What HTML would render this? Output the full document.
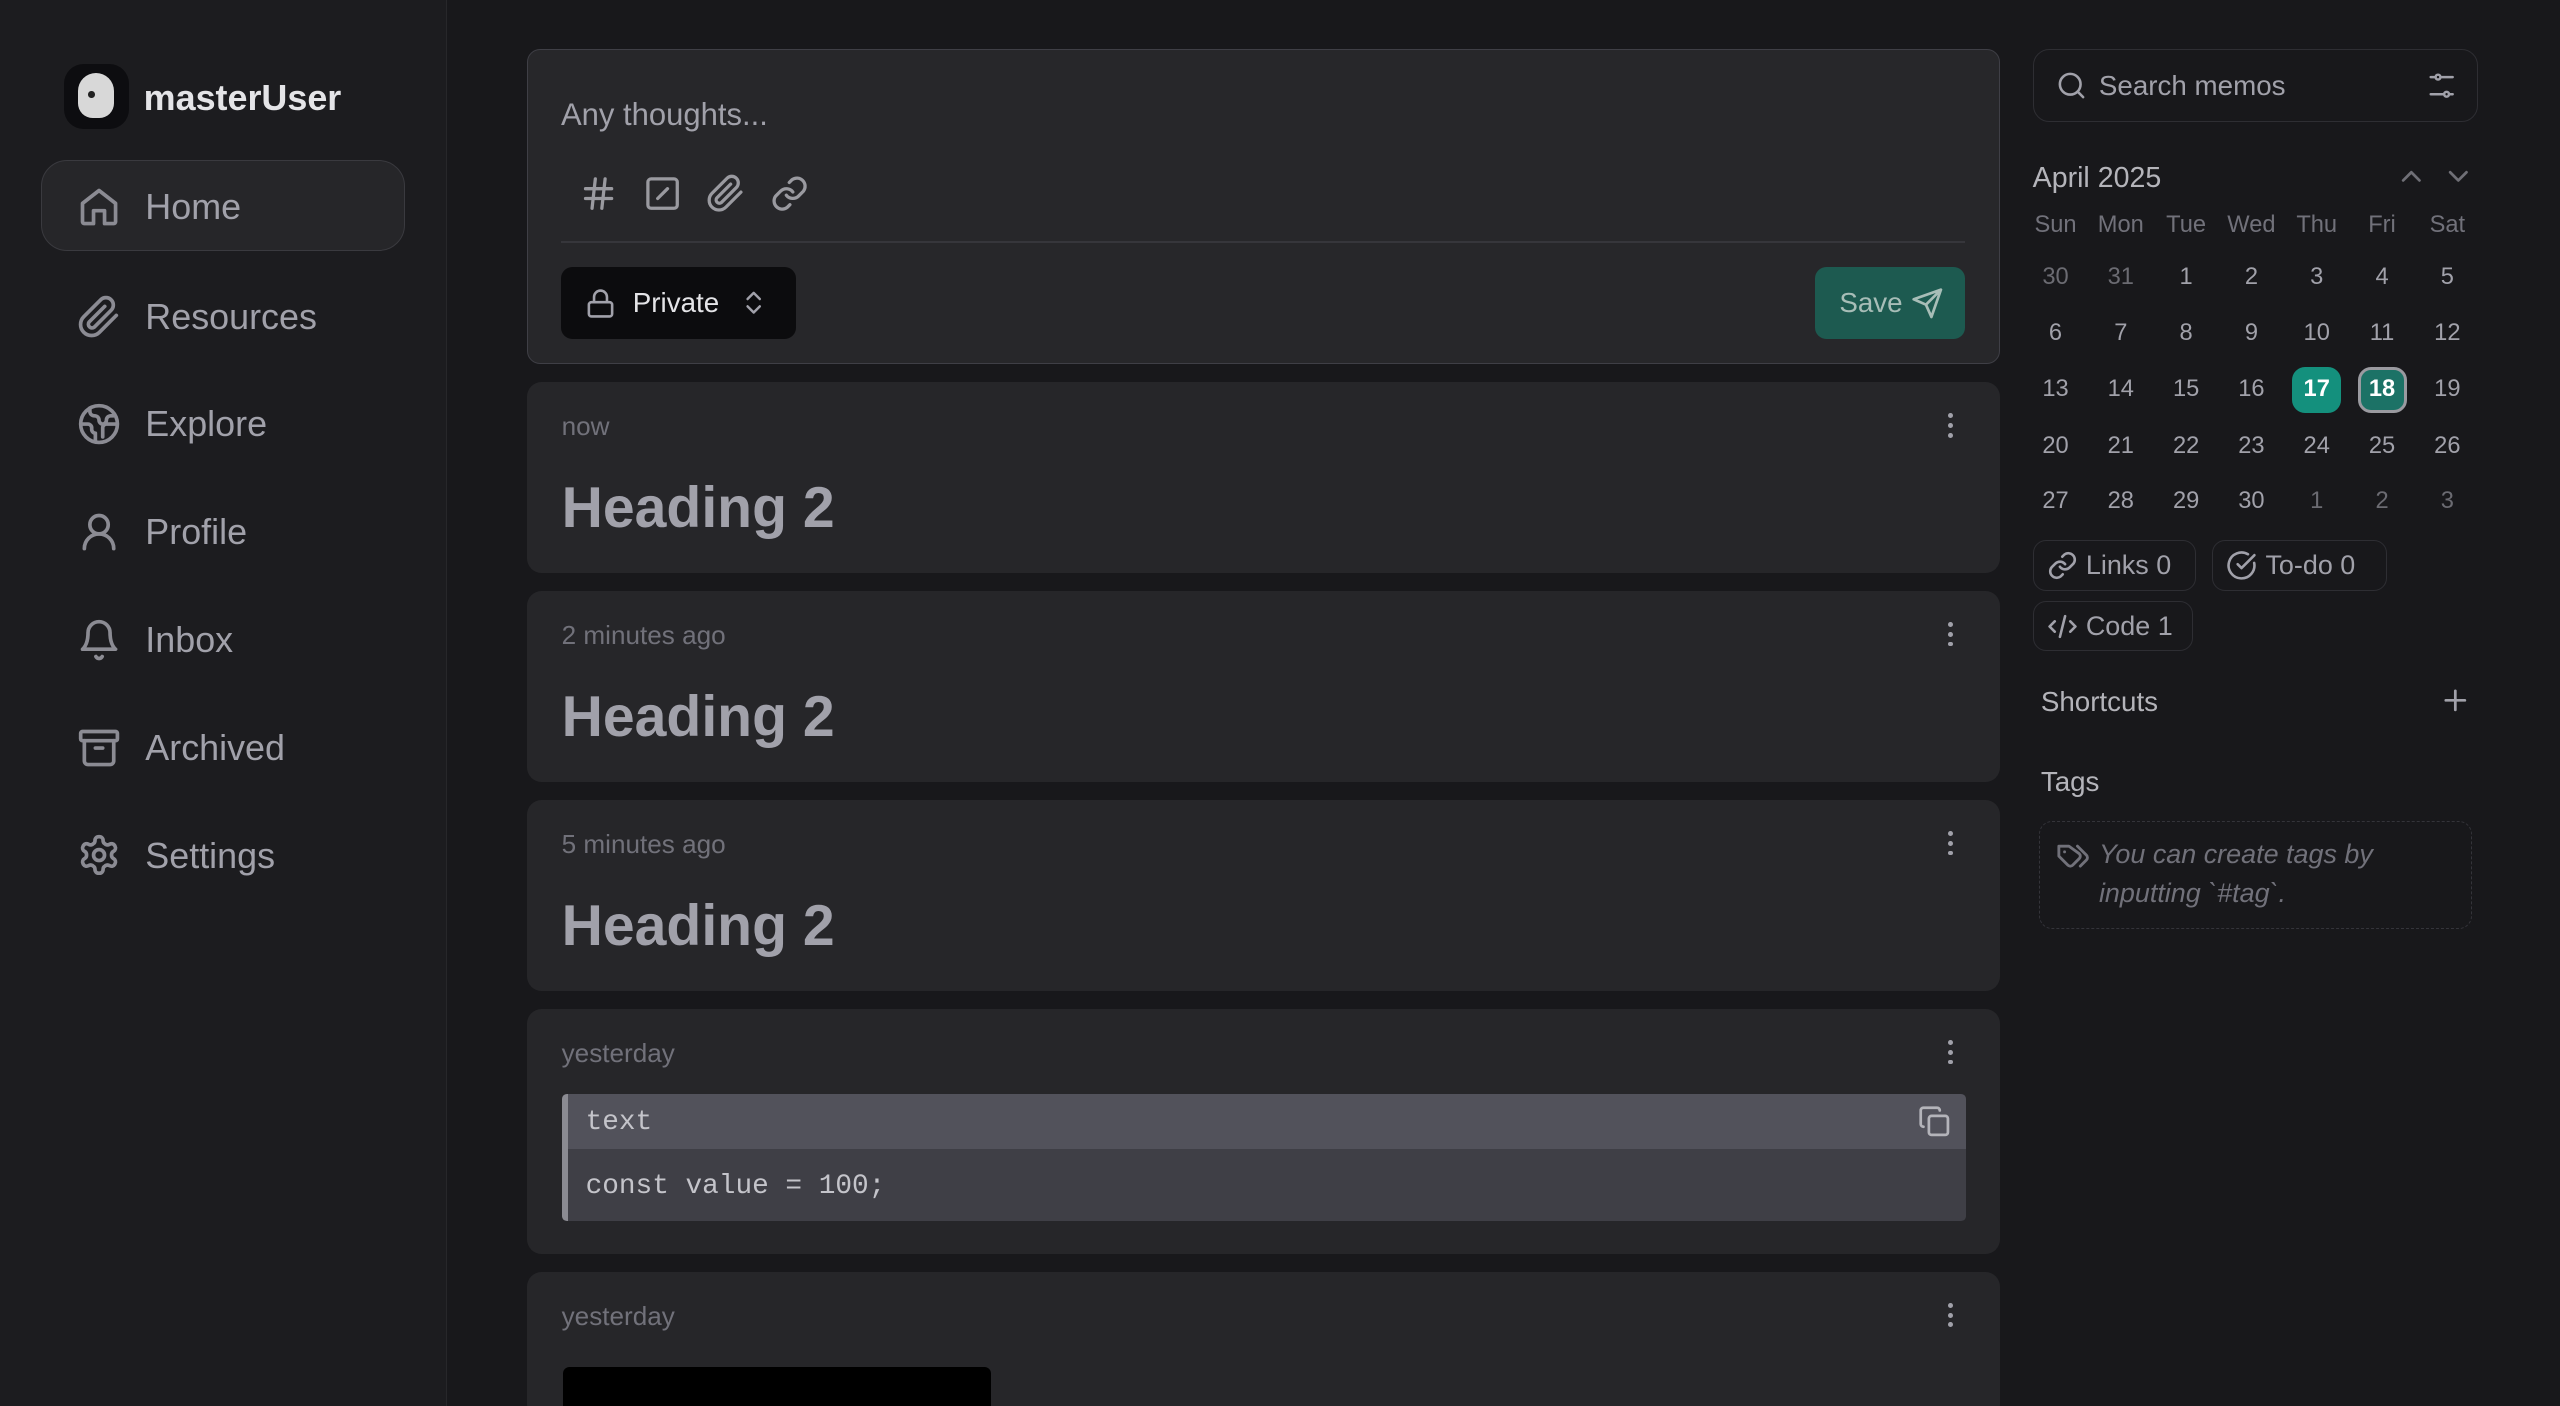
<!DOCTYPE html>
<html><head><meta charset="utf-8"><style>
*{box-sizing:border-box;margin:0;padding:0}
html,body{width:2560px;height:1406px;overflow:hidden;background:#18181b}
#w{zoom:1.63265;width:1568px;height:861px;position:relative;font-family:"Liberation Sans",sans-serif;color:#a1a1aa}
.a{position:absolute}
svg{fill:none;stroke:currentColor;stroke-width:2;stroke-linecap:round;stroke-linejoin:round}
.nav{position:absolute;left:47px;height:30px;display:flex;align-items:center;font-size:22px;color:#a1a1aa}
.nav svg{width:27px;height:27px;margin-right:15px;color:#8b8b93}
.card{position:absolute;left:323px;width:902px;background:#262629;border-radius:9px}
.ts{position:absolute;left:21px;top:18px;font-size:16px;color:#71717a}
.h2{position:absolute;left:21px;top:57px;font-size:35px;font-weight:bold;color:#a1a1aa}
.dots{position:absolute;right:28px;top:19px;width:4px}
.dots i{display:block;width:3px;height:3px;border-radius:50%;background:#a1a1aa;margin-bottom:3px}
.cal{position:absolute;width:40px;text-align:center;font-size:14.5px;color:#a1a1aa}
.chip{position:absolute;height:31px;border:1px solid #2e2e33;border-radius:8px;display:flex;align-items:center;padding-left:8px;font-size:16.5px;color:#a1a1aa}
.chip svg{width:19px;height:19px;margin-right:5px}
</style></head><body><div id="w">
<div class="a" style="left:0;top:0;width:274px;height:861px;background:#1c1c1f;border-right:1px solid #27272a"></div>
<div class="a" style="left:39px;top:39px;width:40px;height:40px;border-radius:12px;background:#0d0d10"><div style="position:absolute;left:9px;top:6px;width:22px;height:27px;border-radius:11px 11px 9px 9px;background:#d8d8d8"></div><div style="position:absolute;left:15px;top:17px;width:4px;height:4px;border-radius:50%;background:#222"></div></div>
<div class="a" style="left:88px;top:47px;font-size:22px;font-weight:bold;color:#e4e4e7">masterUser</div>
<div class="a" style="left:25px;top:98px;width:223px;height:56px;border-radius:16px;border:1px solid #3a3a3f;background:#262629"></div>
<div class="nav" style="top:112px"><svg viewBox="0 0 24 24"><path d="M3 10l9-7 9 7v10a1 1 0 01-1 1h-5v-7H9v7H4a1 1 0 01-1-1z"/></svg>Home</div>
<div class="nav" style="top:179px"><svg viewBox="0 0 24 24"><path d="M21.4 11.1l-9.2 9.2a6 6 0 01-8.5-8.5l9.2-9.2a4 4 0 015.7 5.7l-9.2 9.2a2 2 0 01-2.8-2.8l8.5-8.5"/></svg>Resources</div>
<div class="nav" style="top:245px"><svg viewBox="0 0 24 24"><circle cx="12" cy="12" r="10"/><path d="M21.5 12H16c-1 0-2 1-2 2v5M2.5 12H6c1 0 2 1 2 2v1c0 1 1 2 2 2v4M7 3.3V5c0 1.5 1 2.5 2.5 2.5S12 8.5 12 10c0 1 1 2 2 2s2-1 2-2c0-1.5 1-2.5 2.5-2.5H20"/></svg>Explore</div>
<div class="nav" style="top:311px"><svg viewBox="0 0 24 24"><circle cx="12" cy="8" r="5"/><path d="M20 21a8 8 0 00-16 0"/></svg>Profile</div>
<div class="nav" style="top:377px"><svg viewBox="0 0 24 24"><path d="M6 8a6 6 0 0112 0c0 7 3 9 3 9H3s3-2 3-9M10.3 21a1.9 1.9 0 003.4 0"/></svg>Inbox</div>
<div class="nav" style="top:443px"><svg viewBox="0 0 24 24"><rect x="2" y="3" width="20" height="5" rx="1"/><path d="M4 8v11a2 2 0 002 2h12a2 2 0 002-2V8M10 12h4"/></svg>Archived</div>
<div class="nav" style="top:509px"><svg viewBox="0 0 24 24"><path d="M12.2 2h-.4a2 2 0 00-2 2v.2a2 2 0 01-1 1.7l-.4.3a2 2 0 01-2 0l-.2-.1a2 2 0 00-2.7.7l-.2.4a2 2 0 00.7 2.7l.2.1a2 2 0 011 1.7v.5a2 2 0 01-1 1.7l-.2.1a2 2 0 00-.7 2.7l.2.4a2 2 0 002.7.7l.2-.1a2 2 0 012 0l.4.3a2 2 0 011 1.7v.2a2 2 0 002 2h.4a2 2 0 002-2v-.2a2 2 0 011-1.7l.4-.3a2 2 0 012 0l.2.1a2 2 0 002.7-.7l.2-.4a2 2 0 00-.7-2.7l-.2-.1a2 2 0 01-1-1.7v-.5a2 2 0 011-1.7l.2-.1a2 2 0 00.7-2.7l-.2-.4a2 2 0 00-2.7-.7l-.2.1a2 2 0 01-2 0l-.4-.3a2 2 0 01-1-1.7V4a2 2 0 00-2-2z"/><circle cx="12" cy="12" r="3"/></svg>Settings</div>

<div class="a" style="left:323px;top:30px;width:902px;height:193px;border:1px solid #3f3f46;border-radius:8px;background:#27272a">
<div class="a" style="left:20px;top:29px;font-size:19px;color:#a1a1aa">Any thoughts...</div>
<div class="a" style="left:31px;top:76px;display:flex;gap:15px;color:#9a9aa0"><svg viewBox="0 0 24 24" style="width:24px;height:24px"><path d="M4 9h16M4 15h16M10 3L8 21M16 3l-2 18"/></svg><svg viewBox="0 0 24 24" style="width:24px;height:24px"><rect x="3" y="3" width="18" height="18" rx="2"/><path d="M9 15l6-6"/></svg><svg viewBox="0 0 24 24" style="width:24px;height:24px"><path d="M21.4 11.1l-9.2 9.2a6 6 0 01-8.5-8.5l9.2-9.2a4 4 0 015.7 5.7l-9.2 9.2a2 2 0 01-2.8-2.8l8.5-8.5"/></svg><svg viewBox="0 0 24 24" style="width:24px;height:24px"><path d="M10 13a5 5 0 007.5.5l3-3a5 5 0 00-7-7l-1.7 1.7"/><path d="M14 11a5 5 0 00-7.5-.5l-3 3a5 5 0 007 7l1.7-1.7"/></svg></div>
<div class="a" style="left:20px;top:117px;width:860px;height:1px;background:#36363b"></div>
<div class="a" style="left:20px;top:133px;width:144px;height:44px;border-radius:7px;background:#0c0c0e;color:#e4e4e7;font-size:17px;display:flex;align-items:center;padding-left:15px"><svg viewBox="0 0 24 24" style="width:19px;height:19px;margin-right:10px;color:#a1a1aa"><rect x="3" y="11" width="18" height="11" rx="2"/><path d="M7 11V7a5 5 0 0110 0v4"/></svg>Private<svg viewBox="0 0 24 24" style="width:18px;height:18px;margin-left:12px;color:#a1a1aa"><path d="M7 9l5-5 5 5M7 15l5 5 5-5"/></svg></div>
<div class="a" style="left:788px;top:133px;width:92px;height:44px;border-radius:7px;background:#1d5a50;color:#a7bdb7;font-size:17px;display:flex;align-items:center;padding-left:15px">Save<svg viewBox="0 0 24 24" style="width:20px;height:20px;margin-left:5px"><path d="M22 2L11 13M22 2l-7 20-4-9-9-4z"/></svg></div>
</div>

<div class="card" style="top:234px;height:117px"><div class="ts">now</div><div class="h2">Heading 2</div><div class="dots"><i></i><i></i><i></i></div></div>
<div class="card" style="top:362px;height:117px"><div class="ts">2 minutes ago</div><div class="h2">Heading 2</div><div class="dots"><i></i><i></i><i></i></div></div>
<div class="card" style="top:490px;height:117px"><div class="ts">5 minutes ago</div><div class="h2">Heading 2</div><div class="dots"><i></i><i></i><i></i></div></div>
<div class="card" style="top:618px;height:150px"><div class="ts">yesterday</div><div class="dots"><i></i><i></i><i></i></div>
<div class="a" style="left:21px;top:52px;width:860px;height:78px;border-left:4px solid #8b8b92;border-radius:3px;overflow:hidden;font-family:'Liberation Mono',monospace;font-size:17px;color:#c4c4ca">
<div style="height:34px;background:#52525b;padding:8px 0 0 11px">text</div>
<div style="height:44px;background:#3f3f46;padding:13px 0 0 11px">const value = 100;</div>
<svg viewBox="0 0 24 24" style="position:absolute;right:9px;top:7px;width:20px;height:20px;color:#b4b4ba"><rect x="8" y="8" width="14" height="14" rx="2"/><path d="M4 16a2 2 0 01-2-2V4a2 2 0 012-2h10a2 2 0 012 2"/></svg></div></div>
<div class="card" style="top:779px;height:90px"><div class="ts">yesterday</div><div class="dots"><i></i><i></i><i></i></div><div class="a" style="left:22px;top:58px;width:262px;height:40px;background:#000;border-radius:4px"></div></div>

<div class="a" style="left:1245px;top:30px;width:273px;height:45px;border:1px solid #2e2e33;border-radius:10px;display:flex;align-items:center;padding-left:14px;font-size:17px;color:#a1a1aa"><svg viewBox="0 0 24 24" style="width:19px;height:19px;margin-right:7px"><circle cx="11" cy="11" r="8"/><path d="M21 21l-4.3-4.3"/></svg>Search memos<svg viewBox="0 0 24 24" style="position:absolute;right:13px;width:18px;height:18px"><path d="M21 5h-9M14 19H3M21 19h-3M6 5H3"/><circle cx="9" cy="5" r="2"/><circle cx="16" cy="19" r="2"/></svg></div>
<div class="a" style="left:1245px;top:99px;font-size:17.5px;color:#b4b4ba">April 2025</div>
<svg class="a" viewBox="0 0 24 24" style="left:1467px;top:98px;width:20px;height:20px;color:#6f6f76"><path d="M6 15l6-6 6 6"/></svg>
<svg class="a" viewBox="0 0 24 24" style="left:1496px;top:98px;width:20px;height:20px;color:#6f6f76"><path d="M6 9l6 6 6-6"/></svg>
<div id="cal"></div>
<div class="chip" style="left:1245px;top:331px;width:100px"><svg viewBox="0 0 24 24"><path d="M10 13a5 5 0 007.5.5l3-3a5 5 0 00-7-7l-1.7 1.7"/><path d="M14 11a5 5 0 00-7.5-.5l-3 3a5 5 0 007 7l1.7-1.7"/></svg>Links 0</div>
<div class="chip" style="left:1355px;top:331px;width:107px"><svg viewBox="0 0 24 24"><path d="M21.8 10A10 10 0 1117 3.3"/><path d="M9 11l3 3L22 4"/></svg>To-do 0</div>
<div class="chip" style="left:1245px;top:368px;width:98px"><svg viewBox="0 0 24 24"><path d="M14 4l-4 16M18 8l4 4-4 4M6 8l-4 4 4 4"/></svg>Code 1</div>
<div class="a" style="left:1250px;top:420px;font-size:17px;color:#b4b4ba">Shortcuts</div>
<svg class="a" viewBox="0 0 24 24" style="left:1494px;top:419px;width:20px;height:20px;color:#a1a1aa"><path d="M5 12h14M12 5v14"/></svg>
<div class="a" style="left:1250px;top:469px;font-size:17px;color:#b4b4ba">Tags</div>
<div class="a" style="left:1249px;top:503px;width:265px;height:66px;border:1px dashed #34343a;border-radius:8px;font-size:16.5px;font-style:italic;color:#71717a;padding:8px 0 0 36px;line-height:24px">You can create tags by inputting `#tag`.<svg viewBox="0 0 24 24" style="position:absolute;left:10px;top:10px;width:21px;height:21px;color:#71717a"><path d="M9 5H2v7l6.3 6.3a2.4 2.4 0 003.4 0l4.6-4.6a2.4 2.4 0 000-3.4z"/><path d="M6 9.01V9M15 5l6.3 6.3a2.4 2.4 0 010 3.4L17 19"/></svg></div>
<script>
var h='',d=['Sun','Mon','Tue','Wed','Thu','Fri','Sat'];
for(var i=0;i<7;i++)h+='<div class="cal" style="left:'+(1239+40*i)+'px;top:130px;color:#71717a">'+d[i]+'</div>';
var days=[30,31];for(var n=1;n<=30;n++)days.push(n);days.push(1,2,3);
var ys=[171,205,239,274,308];
for(var k=0;k<35;k++){var r=Math.floor(k/7),c=k%7,v=days[k],x=1239+40*c,y=ys[r];var dim=(k<2||k>31);var st='left:'+x+'px;top:'+(y-9)+'px;'+(dim?'color:#6b6b72;':'');
if(v==17&&k==18)h+='<div class="a" style="left:'+(x+5)+'px;top:'+(y-14)+'px;width:30px;height:28px;border-radius:8px;background:#14907d"></div>',st+='color:#fff;font-weight:bold;';
if(v==18&&k==19)h+='<div class="a" style="left:'+(x+5)+'px;top:'+(y-14)+'px;width:30px;height:28px;border-radius:8px;background:#1c7266;border:2px solid #9a9aa0"></div>',st+='color:#fff;font-weight:bold;';
h+='<div class="cal" style="'+st+'">'+v+'</div>';}
document.getElementById('cal').innerHTML=h;
</script>
</div></body></html>
